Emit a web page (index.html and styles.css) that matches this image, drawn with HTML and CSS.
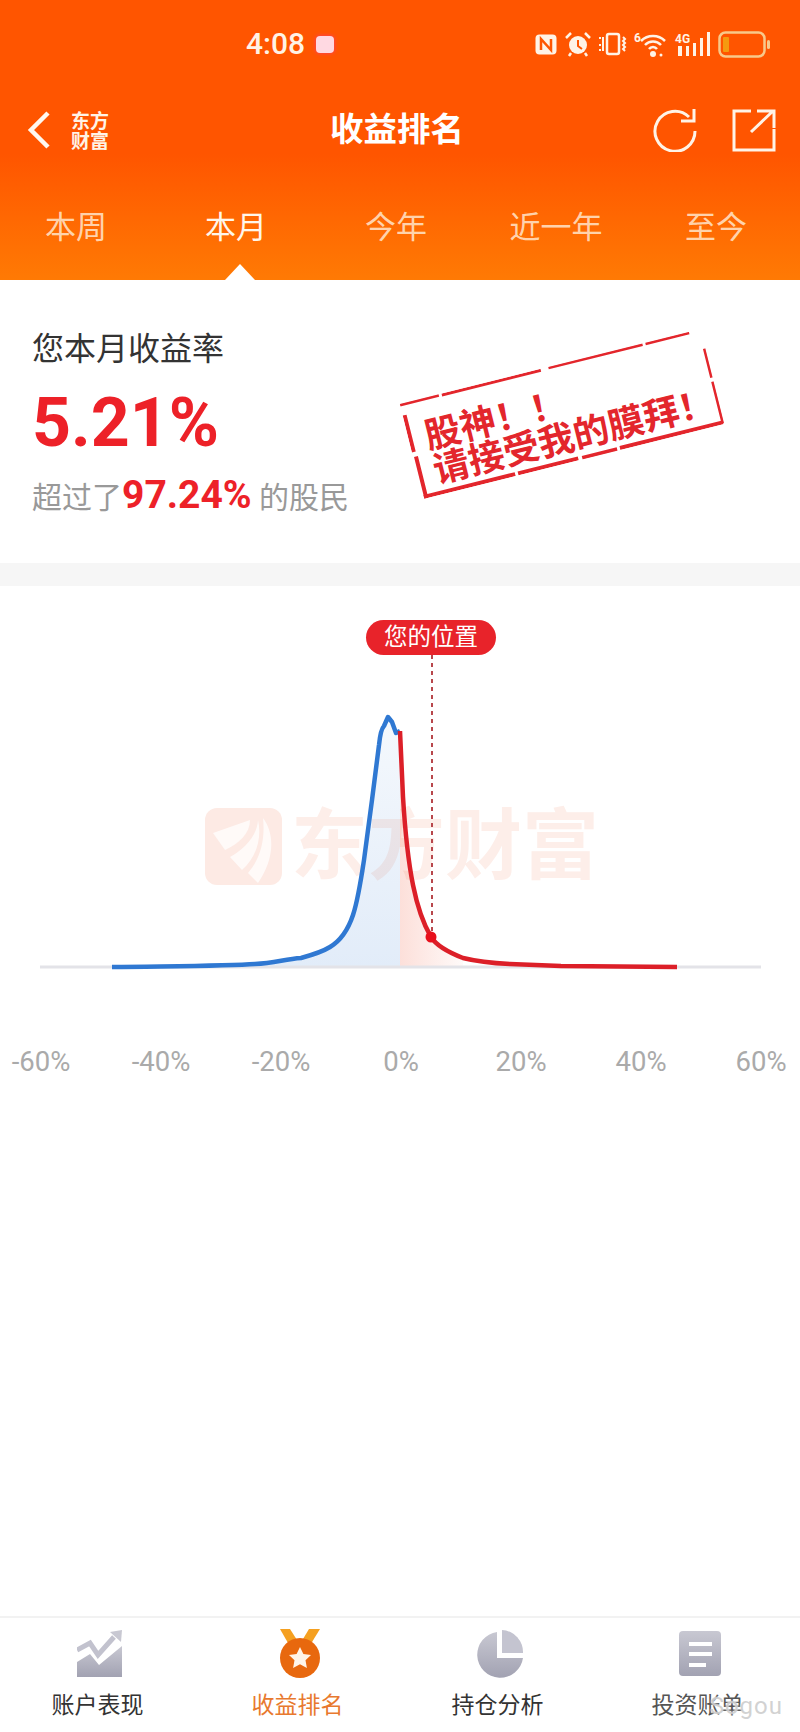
FILE: index.html
```html
<!DOCTYPE html>
<html lang="zh-CN">
<head>
    <meta charset="UTF-8">
    <meta name="viewport" content="width=device-width, initial-scale=1.0">
    <title>收益排名</title>
    <link rel="stylesheet" href="styles.css">
</head>
<body>
<div class="page">
    <header class="header">
        <!-- Status bar -->
        <div class="status-bar">
            <span class="status-time">4:08</span>
            <span class="status-note"></span>
            <div class="status-icons">
                <svg width="24" height="23" viewBox="0 0 24 23"><rect x="1.500" y="1.500" width="21" height="20" rx="4" fill="#fff3e6"/><path d="M7 17V6l10 11V6" fill="none" stroke="#ff5500" stroke-width="2.500"/></svg>
                <svg width="26" height="24" viewBox="0 0 26 24"><circle cx="13" cy="13" r="9" fill="#fff3e6"/><path d="M13 8v6l4 3" fill="none" stroke="#ff5500" stroke-width="2"/><path d="M1 6l5-5M25 6l-5-5M6 21l-2 3M20 21l2 3" stroke="#fff3e6" stroke-width="2.500"/></svg>
                <svg width="29" height="24" viewBox="0 0 29 24"><rect x="9" y="2" width="12" height="20" rx="2" fill="none" stroke="#fff3e6" stroke-width="2.500"/><path d="M2 5v2M5 5v14M2 12v2M2 17v2M25 5l2 2-2 2 2 2-2 2 2 2-2 2 2 2" fill="none" stroke="#fff3e6" stroke-width="2"/></svg>
                <svg width="34" height="25" viewBox="0 0 34 25"><text x="0" y="10" class="status-tiny">6</text><path d="M7 9a17 17 0 0 1 24 0M11 13a11 11 0 0 1 16 0M15 17a5 5 0 0 1 8 0" fill="none" stroke="#fff3e6" stroke-width="2.500"/><circle cx="19" cy="22" r="3" fill="#fff3e6"/><circle cx="27" cy="23" r="1.500" fill="#fff3e6"/></svg>
                <svg width="36" height="25" viewBox="0 0 36 25"><text x="0" y="11" class="status-tiny">4G</text><path d="M3 14h4v10H3zM11 14h3v10h-3zM18 11h3v13h-3zM25 6h3v18h-3zM32 0h3v24h-3z" fill="#fff3e6"/></svg>
                <svg width="52" height="27" viewBox="0 0 52 27"><rect x="1.500" y="1.500" width="45" height="24" rx="6" fill="none" stroke="#f8c98a" stroke-width="2.500"/><rect x="5" y="6" width="6" height="15" rx="1" fill="#f59a10"/><rect x="49" y="9" width="3" height="9" rx="1.500" fill="#f8c98a"/></svg>
            </div>
        </div>

        <!-- Title row -->
        <div class="nav-bar">
            <div class="nav-left">
                <svg class="nav-back" width="24" height="38" viewBox="0 0 24 38"><path d="M21 2L4 19l17 17" fill="none" stroke="#fff8ef" stroke-width="4.500"/></svg>
                <div class="nav-logo">东方<br>财富</div>
            </div>
            <h1 class="nav-title">收益排名</h1>
            <div class="nav-right">
                <svg width="44" height="44" viewBox="0 0 44 44"><path d="M36 9A20 20 0 1 0 42 23" fill="none" stroke="#fff3e6" stroke-width="3"/><path d="M28 13H41V1" fill="none" stroke="#fff3e6" stroke-width="3"/></svg>
                <svg width="44" height="43" viewBox="0 0 44 43"><path d="M19 2H2V41H42V20" fill="none" stroke="#fff3e6" stroke-width="3"/><path d="M19 23L41 2M25 2H42V19" fill="none" stroke="#fff3e6" stroke-width="3"/></svg>
            </div>
        </div>

        <!-- Period tabs -->
        <div class="period-tabs">
            <div class="period-tab">本周</div>
            <div class="period-tab period-tab-active">本月</div>
            <div class="period-tab">今年</div>
            <div class="period-tab">近一年</div>
            <div class="period-tab">至今</div>
        </div>
    </header>

    <section class="summary">
        <div class="summary-text">
            <div class="summary-title">您本月收益率</div>
            <div class="summary-value">5.21%</div>
            <div class="summary-sub">超过了<b>97.24%</b> 的股民</div>
        </div>
        <div class="stamp">
            <svg class="stamp-border" width="310" height="98" viewBox="0 0 310 98">
                <path d="M0 1H40M43 1.500H145" fill="none" stroke="#e3262c" stroke-width="3"/>
                <path d="M153 1H250M253 1H298" fill="none" stroke="#e3262c" stroke-width="3"/>
                <path d="M309 20V50M309 54V97" fill="none" stroke="#e3262c" stroke-width="3"/>
                <path d="M1 96H95M98 96H160M164 96.500H200M203 96H309" fill="none" stroke="#e3262c" stroke-width="4"/>
                <path d="M2 12V50M3 55V98" fill="none" stroke="#e3262c" stroke-width="4"/>
            </svg>
            <div>股神！！</div>
            <div>请接受我的膜拜！</div>
        </div>
    </section>

    <div class="divider"></div>

    <!-- Distribution chart -->
    <section class="chart">
        <svg class="chart-svg" width="800" height="446" viewBox="0 586 800 446">
            <defs>
                <linearGradient id="fillBlue" x1="0" y1="0" x2="0" y2="1">
                    <stop offset="0" stop-color="#2f78d2" stop-opacity="0.05"/>
                    <stop offset="1" stop-color="#2f78d2" stop-opacity="0.14"/>
                </linearGradient>
                <linearGradient id="fillRed" x1="0" y1="0" x2="1" y2="0">
                    <stop offset="0" stop-color="#f05030" stop-opacity="0.18"/>
                    <stop offset="1" stop-color="#f05030" stop-opacity="0.03"/>
                </linearGradient>
            </defs>

            <!-- Watermark -->
            <rect x="205" y="808" width="77" height="77" rx="12" fill="#fdeae4"/>
            <path d="M213 833L250 820C250 833 240 843 225 850Z" fill="#fff" fill-opacity="0.75"/>
            <path d="M258 820C262 837 257 857 242 870L230 857C243 850 257 837 258 820Z" fill="#fff" fill-opacity="0.75"/>
            <path d="M263 818C277 837 272 863 258 883L248 873C262 857 265 837 263 818Z" fill="#fff" fill-opacity="0.75"/>
            <text x="291" y="873" class="chart-mark">东方财富</text>

            <path d="M112 967C180 966 230 966 255 964C275 963 285 959 301 958C312 955 322 952 330 947C340 941 348 930 353 915C358 900 361 880 364 860L372 800L379 745C380 735 382 728 384 726L388 717L392 722L396 733L400 731V967Z" fill="url(#fillBlue)"/>
            <path d="M400 731L403 797C405 830 408 860 413 885C417 905 424 925 431 937C436 945 445 951 463 958V967H400Z" fill="url(#fillRed)"/>

            <line x1="40" y1="967" x2="761" y2="967" stroke="#e3e3e8" stroke-width="3"/>
            <line x1="432" y1="655" x2="432" y2="937" stroke="#b8474c" stroke-width="2" stroke-dasharray="4 4"/>

            <path d="M112 967C180 966 230 966 255 964C275 963 285 959 301 958C312 955 322 952 330 947C340 941 348 930 353 915C358 900 361 880 364 860L372 800L379 745C380 735 382 728 384 726L388 717L392 722L396 733L400 731" fill="none" stroke="#2f78d2" stroke-width="4.500" stroke-linejoin="round"/>
            <path d="M400 731L403 797C405 830 408 860 413 885C417 905 424 925 431 937C436 945 445 951 463 958C475 961 490 963 510 964L561 966L677 967" fill="none" stroke="#dc1f28" stroke-width="4.500" stroke-linejoin="round"/>
            <circle cx="431" cy="937" r="5.500" fill="#e8101c"/>
        </svg>
        <div class="chart-pin">您的位置</div>
        <div class="chart-labels">
            <span>-60%</span>
            <span>-40%</span>
            <span>-20%</span>
            <span>0%</span>
            <span>20%</span>
            <span>40%</span>
            <span>60%</span>
        </div>
    </section>

    <nav class="tabbar">
        <svg width="0" height="0" class="tabbar-defs">
            <defs>
                <linearGradient id="iconGray" x1="0" y1="0" x2="0" y2="1">
                    <stop offset="0" stop-color="#c8c8d2"/>
                    <stop offset="1" stop-color="#a2a2b2"/>
                </linearGradient>
            </defs>
        </svg>
        <div class="tabbar-item">
            <svg width="46" height="50" viewBox="0 -3 46 50"><path d="M0 18L13 11L21 23L37 5" fill="none" stroke="#c2c2ce" stroke-width="5"/><path d="M33 0L45 -2L44 10Z" fill="#c8c8d2"/><path d="M0 30L13 22L22 33L45 14V45H0Z" fill="url(#iconGray)"/></svg>
            <span>账户表现</span>
        </div>
        <div class="tabbar-item tabbar-item-active">
            <svg width="42" height="50" viewBox="0 0 42 50"><path d="M1 0H11L18 11L9 14Z" fill="#f5a020"/><path d="M41 0H30L24 10L33 13Z" fill="#f5a020"/><circle cx="21" cy="29" r="20" fill="#e8680e"/><path d="M21 18l3.400 7 7.600 1-5.500 5.300 1.400 7.700-6.900-3.700-6.900 3.700 1.400-7.700L10 26l7.600-1z" fill="#fff4e8"/></svg>
            <span>收益排名</span>
        </div>
        <div class="tabbar-item">
            <svg width="48" height="50" viewBox="0 -2 48 50"><path d="M21 1V27H47A23 23 0 1 1 21 1Z" fill="url(#iconGray)"/><path d="M26 -1A22 22 0 0 1 47 22H26Z" fill="#c4c4d0"/></svg>
            <span>持仓分析</span>
        </div>
        <div class="tabbar-item tabbar-item-last">
            <svg width="42" height="50" viewBox="0 -2 42 50"><rect width="42" height="45" rx="4" fill="url(#iconGray)"/><path d="M10 11H33V15H10ZM10 21H33V25H10ZM10 32H27V36H10Z" fill="#fff"/></svg>
            <span>投资账单</span>
        </div>
        <div class="tabbar-mark">Sogou</div>
    </nav>
</div>
</body>
</html>
```

FILE: styles.css
```css
* {
    box-sizing: border-box;
}
body {
    margin: 0;
    background: #fff;
    font-family: Roboto, "Noto Sans CJK SC", sans-serif;
    overflow: hidden;
}
.page {
    width: 800px;
    height: 1732px;
    display: flex;
    flex-direction: column;
}

/* Header */
.header {
    height: 280px;
    background: linear-gradient(180deg, #ff5500 0%, #ff5500 55%, #ff7a04 100%);
    color: #fff;
}
.status-bar {
    height: 88px;
    display: flex;
    align-items: center;
    padding: 0 30px 0 246px;
}
.status-time {
    font-size: 30px;
    font-weight: 500;
    color: #fff3e6;
    line-height: 88px;
}
.status-note {
    width: 18px;
    height: 17px;
    margin-left: 11px;
    border-radius: 4px;
    background: #ffd9e2;
    box-shadow: 0 0 4px #ff3a6a;
}
.status-icons {
    margin-left: auto;
    display: flex;
    align-items: center;
    gap: 7px;
}
.status-icons svg {
    overflow: visible;
}
.status-tiny {
    font-size: 12px;
    font-weight: 700;
    fill: #fff3e6;
}
.nav-bar {
    height: 84px;
    display: grid;
    grid-template-columns: 1fr auto 1fr;
    align-items: center;
    padding: 0 24px 0 18px;
}
.nav-left {
    display: flex;
    align-items: center;
    gap: 20px;
    padding-left: 9px;
}
.nav-logo {
    font-size: 19px;
    line-height: 20px;
    font-weight: 700;
    font-family: "Noto Sans CJK SC", sans-serif;
    color: #fff3e6;
}
.nav-title {
    margin: 0;
    font-size: 33.500px;
    line-height: 40px;
    font-weight: 700;
    color: #fff;
}
.nav-right {
    display: flex;
    justify-content: flex-end;
    align-items: center;
    gap: 35px;
}
.period-tabs {
    display: grid;
    grid-template-columns: repeat(5, 160px);
    margin-left: -4px;
    height: 108px;
}
.period-tab {
    position: relative;
    padding-top: 36px;
    text-align: center;
    font-size: 31px;
    line-height: 40px;
    color: rgba(255, 240, 220, 0.8);
}
.period-tab-active {
    color: #fff6ea;
}
.period-tab-active::after {
    content: "";
    position: absolute;
    left: 50%;
    bottom: 0;
    margin-left: -11px;
    border-left: 15px solid transparent;
    border-right: 15px solid transparent;
    border-bottom: 16px solid #fff;
}

/* Summary */
.summary {
    height: 283px;
    display: flex;
    align-items: flex-start;
    padding: 53px 83px 0 32px;
}
.summary-title {
    font-size: 32px;
    line-height: 32px;
    color: #333;
}
.summary-value {
    margin-top: 22px;
    font-size: 68px;
    line-height: 72px;
    font-weight: 700;
    color: #ed2128;
}
.summary-sub {
    margin-top: 16px;
    font-size: 30px;
    line-height: 40px;
    color: #999;
    white-space: nowrap;
}
.summary-sub b {
    font-size: 39px;
    color: #ed2128;
}
.stamp {
    position: relative;
    width: 310px;
    height: 98px;
    margin-top: 32px;
    margin-left: auto;
    padding: 22px 0 0 17px;
    transform: rotate(-14deg);
    color: #e3262c;
    font-size: 36px;
    line-height: 35px;
    font-weight: 700;
    white-space: nowrap;
}
.stamp-border {
    position: absolute;
    left: 0;
    top: 0;
}
.divider {
    height: 23px;
    background: #f6f6f6;
}

/* Chart */
.chart {
    position: relative;
    height: 514px;
}
.chart-svg {
    display: block;
}
.chart-mark {
    font-family: "Noto Sans CJK SC", sans-serif;
    font-size: 77px;
    font-weight: 700;
    fill: #fdeee9;
}
.chart-pin {
    position: absolute;
    left: 366px;
    top: 34px;
    width: 130px;
    height: 35px;
    border-radius: 18px;
    background: #e8232a;
    color: #fff;
    text-align: center;
    font-size: 23.500px;
    line-height: 35px;
}
.chart-labels {
    position: absolute;
    left: 0;
    top: 458px;
    width: 800px;
    display: grid;
    grid-template-columns: repeat(7, 78px);
    column-gap: 42px;
    padding-left: 2px;
    text-align: center;
    font-size: 27.500px;
    line-height: 36px;
    color: #aaa;
}

/* Bottom tabs */
.tabbar {
    position: relative;
    margin-top: auto;
    height: 116px;
    border-top: 2px solid #f2f2f2;
    display: grid;
    grid-template-columns: repeat(4, 200px);
    padding-top: 11px;
}
.tabbar-defs {
    position: absolute;
}
.tabbar-item {
    display: flex;
    flex-direction: column;
    align-items: center;
    font-size: 23px;
    line-height: 30px;
    color: #333;
}
.tabbar-item svg {
    margin-bottom: 12px;
}
.tabbar-item span {
    margin-right: 5px;
}
.tabbar-item-active {
    color: #e8792e;
}
.tabbar-item-last {
    color: #555;
}
.tabbar-mark {
    position: absolute;
    right: 17px;
    top: 73px;
    font-size: 24px;
    line-height: 30px;
    color: rgba(195, 195, 195, 0.75);
    letter-spacing: 1px;
    text-shadow: 0 0 2px #fff;
}
```
